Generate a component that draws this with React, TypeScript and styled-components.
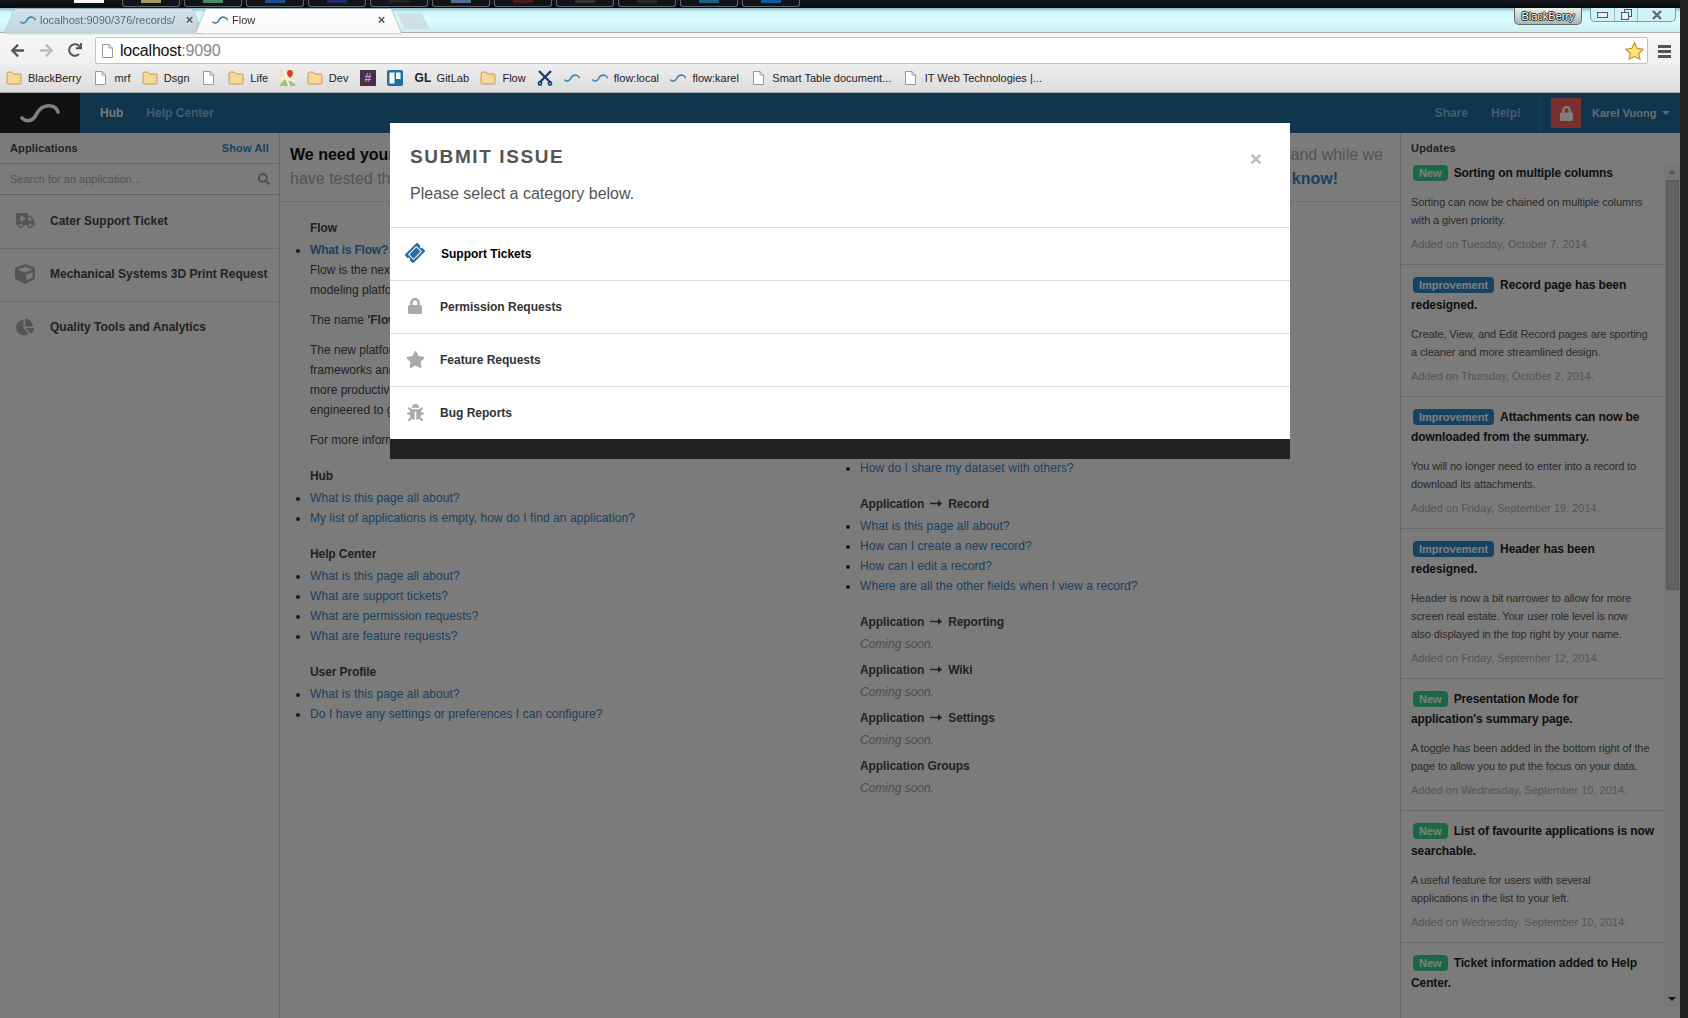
import React from "react";
import styled, { createGlobalStyle } from "styled-components";
import { FaAmbulance, FaArrowLeft, FaArrowRight, FaBug, FaChartPie, FaCube, FaLock, FaRedo, FaSearch, FaStar, FaTicketAlt } from "react-icons/fa";

const GlobalStyle = createGlobalStyle`
  html, body { margin: 0; padding: 0; background: #222; }
  body { font-family: "Liberation Sans", Arial, sans-serif; font-size: 12px; color: #444; overflow: hidden; }
  * { box-sizing: border-box; }
`;

const Screen = styled.div`display: flex; width: 1688px; height: 1018px; overflow: hidden;`;
const Win = styled.div`display: flex; flex-direction: column; width: 1680px; height: 1018px;`;
const DesktopEdge = styled.div`flex: 1; background: #222;`;

const Taskbar = styled.div`
  display: flex; gap: 4px; height: 8px; padding-left: 122px; position: relative;
  background: linear-gradient(#14181d, #05080c);
`;
const TaskChip = styled.div`width: 30px; height: 3px; background: #f4f4f4; margin-left: -48px; margin-right: 14px;`;
const TaskButton = styled.div<{ $peek: string }>`
  width: 58px; height: 7px; border: 1px solid #666; border-top: 0; border-radius: 0 0 3px 3px;
  display: flex; justify-content: center; background: #11151a;
  &::after { content: ""; width: 20px; height: 3px; background: ${(p) => p.$peek}; }
`;

const TabStrip = styled.div`
  display: flex; height: 25px; padding-left: 5px; position: relative;
  background: linear-gradient(#8fb4c8 0, #cdf6f8 4px, #d9fdfd 12px, #cceeee 24px);
  box-shadow: inset 0 -1px #a6b0b3;
`;
const TabFrame = styled.div<{ $active?: boolean }>`
  margin-top: 1px; margin-left: ${(p) => (p.$active ? "-6px" : "0")};
  filter: drop-shadow(0 0 1px #8b9ba3); position: relative; z-index: ${(p) => (p.$active ? 2 : 1)};
`;
const Tab = styled.div<{ $active?: boolean }>`
  display: flex; align-items: center; gap: 4px; height: 24px;
  width: ${(p) => (p.$active ? "205px" : "197px")};
  padding: ${(p) => (p.$active ? "0 15px 3px 16px" : "0 8px 3px 15px")};
  background: ${(p) => (p.$active ? "linear-gradient(#fff, #f8f8f8)" : "linear-gradient(#d4e3ea, #c3d4dc)")};
  clip-path: polygon(0 100%, 10px 0, calc(100% - 10px) 0, 100% 100%);
  color: ${(p) => (p.$active ? "#333" : "#5a6a72")};
  font-size: 11px;
`;
const TabTitle = styled.span`flex: 1; white-space: nowrap; overflow: hidden; padding-right: 8px;`;
const TabClose = styled.span`width: 9px; font-size: 13px; font-weight: 700; color: #555; line-height: 1; text-align: center;`;
const NewTab = styled.div`
  width: 33px; height: 16px; margin: 5px 0 0 -4px; background: #cfe0e4;
  clip-path: polygon(0 0, 24px 0, 100% 100%, 7px 100%);
`;
const WindowTools = styled.div`display: flex; gap: 8px; margin-left: auto; padding-right: 4px; align-items: flex-start; height: 17px;`;
const ProfileChip = styled.div`
  width: 68px; height: 17px; border: 1px solid #5a6a6a; border-top: 0; border-radius: 0 0 5px 5px;
  background: linear-gradient(#e6f0ea, #a5b8b2); color: #fff; font-size: 11px; line-height: 16px; text-align: center;
  text-shadow: 1px 0 #222, -1px 0 #222, 0 1px #222, 0 -1px #222;
`;
const WinControls = styled.div`
  display: flex; width: 86px; height: 14px; border: 1px solid #7f9aa5; border-top: 0; border-radius: 0 0 5px 5px;
  background: #d2f3f4;
`;
const WinControl = styled.div<{ $wide?: boolean }>`
  flex: ${(p) => (p.$wide ? "1" : "0 0 23px")}; display: flex; align-items: center; justify-content: center;
  & + & { border-left: 1px solid #9fb6bd; }
`;

const Toolbar = styled.div`
  display: flex; align-items: flex-end; height: 31px; padding: 0 9px 0 10px; background: linear-gradient(#f6f6f6, #f0f0f0);
`;
const NavArrows = styled.div`display: flex; gap: 14px; width: 85px; height: 26px; align-items: center; padding-bottom: 2px;`;
const Omnibox = styled.div`
  flex: 1; display: flex; align-items: center; gap: 7px; height: 27px; padding: 0 3px 0 6px;
  background: #fff; border: 1px solid #c2c2c2; border-radius: 2px; font-size: 16px; letter-spacing: -0.2px; color: #111;
`;
const Port = styled.span`color: #888; margin-left: -7px;`;
const OmniSpacer = styled.span`flex: 1;`;
const Hamburger = styled.div`
  width: 13px; height: 13px; margin: 0 0 6px 10px;
  background: repeating-linear-gradient(#555 0 3px, transparent 3px 5px);
`;

const Bookmarks = styled.div`
  display: flex; align-items: center; gap: 11.4px; height: 29px; padding-left: 6px;
  background: linear-gradient(#eeeeee, #dcdcdc); border-bottom: 1px solid #a5a5a5;
  font-size: 11px; color: #222;
`;
const Bookmark = styled.div`display: flex; align-items: center; gap: 6px;`;
const BmBox = styled.span`display: flex; justify-content: center; width: 16px;`;
const SlackMark = styled.span`
  display: block; width: 16px; height: 16px; background: #4a2f4b; color: #b9a8bb;
  font-size: 12px; font-weight: 700; line-height: 16px; text-align: center;
`;
const GL = styled.span`width: 16px; font-weight: 700; font-size: 12px; color: #222;`;

const AppArea = styled.div`flex: 1; display: flex; flex-direction: column; position: relative; background: #f7f7f7; min-height: 0;`;
const Nav = styled.div`display: flex; align-items: stretch; height: 40px; background: #206a9a; flex: none;`;
const LogoBox = styled.div`width: 80px; background: #222; display: flex; align-items: center; justify-content: center;`;
const NavLinks = styled.div`display: flex; align-items: center; gap: 23px; padding-left: 20px;`;
const NavLink = styled.span<{ $on?: boolean }>`font-weight: 700; font-size: 12px; color: ${(p) => (p.$on ? "#e8f4fc" : "#8cb8d4")};`;
const NavRight = styled.div`display: flex; align-items: center; gap: 23px; margin-left: auto;`;
const UserMenu = styled.div`
  display: flex; align-items: center; height: 100%; margin-left: -4px; padding: 0 10px; border-left: 1px solid #3a7cab;
`;
const LockBox = styled.div`
  width: 30px; height: 30px; background: #f45e5e; color: #fff; display: flex; align-items: center; justify-content: center; margin-right: 11px;
`;
const UserName = styled.span`font-weight: 700; font-size: 11px; color: #c8dcec; width: 70px;`;
const Caret = styled.span`width: 0; height: 0; border: 4px solid transparent; border-top-color: #c8dcec; border-bottom: 0;`;

const Body = styled.div`flex: 1; display: flex; min-height: 0;`;
const Sidebar = styled.aside`width: 280px; flex: none; border-right: 1px solid #cfcfcf;`;
const SideHead = styled.div`
  display: flex; justify-content: space-between; align-items: center; height: 31px; padding: 0 10px;
  border-bottom: 1px solid #cfcfcf; font-weight: 700; font-size: 11px; letter-spacing: 0.15px; color: #444;
`;
const ShowAll = styled.span`color: #3484c0;`;
const SideSearch = styled.div`
  display: flex; justify-content: space-between; align-items: center; height: 31px; padding: 0 9px 0 10px;
  border-bottom: 1px solid #c8c8c8; font-size: 11px; color: #a8a8a8;
`;
const SideRow = styled.div`
  display: flex; align-items: center; height: 53px; padding: 0 0 2px 14px; gap: 14px; font-weight: 700; font-size: 12px; color: #444;
  & + & { border-top: 1px solid #d6d6d6; }
`;
const SideIcon = styled.span`display: flex; justify-content: center; width: 22px; color: #aaa;`;

const Main = styled.main`flex: 1; min-width: 0;`;
const Banner = styled.div`
  height: 69px; padding: 10px 17px 0 10px; border-bottom: 1px solid #dcdcdc; font-size: 16px; line-height: 24px; color: #a8a8a8;
`;
const BannerLine = styled.div<{ $inset?: number }>`display: flex; justify-content: space-between; padding-right: ${(p) => p.$inset ?? 0}px;`;
const BannerStrong = styled.b`color: #111;`;
const BannerLink = styled.b`color: #3484c0;`;
const Columns = styled.div`display: grid; grid-template-columns: 550px 550px; padding: 16px 10px 0;`;
const Column = styled.div<{ $top?: number }>`padding-top: ${(p) => p.$top ?? 0}px;`;
const Heading = styled.div`padding-left: 20px; font-weight: 700; line-height: 20px; margin-bottom: 2px; color: #444; letter-spacing: -0.1px;`;
const HelpList = styled.ul`margin: 0 0 16px; padding: 0 0 0 20px; line-height: 20px; color: #333;`;
const HelpLink = styled.a<{ $bold?: boolean }>`
  color: #3484c0; font-weight: ${(p) => (p.$bold ? 700 : 400)}; letter-spacing: ${(p) => (p.$bold ? "-0.2px" : "0.08px")};
`;
const Para = styled.p`margin: 0 0 10px; color: #444; white-space: nowrap; &:last-child { margin-bottom: 0; }`;
const Soon = styled.p`margin: 0 0 6px; padding-left: 20px; line-height: 20px; font-style: italic; color: #999;`;
const ArrowMark = styled.svg`width: 12px; height: 7px; margin: 0 6px; vertical-align: 1px;`;

const Updates = styled.aside`flex: none; display: flex; width: 280px; border-left: 1px solid #cfcfcf;`;
const Feed = styled.div`width: 263px; flex: none; overflow: hidden;`;
const FeedHead = styled.div`padding: 6px 10px 0; height: 25px; line-height: 18px; font-size: 11px; font-weight: 700; color: #444; letter-spacing: 0.2px;`;
const FeedItem = styled.article`
  padding: 10px 6px 11px 10px; border-bottom: 1px solid #d0d0d0;
  &:first-of-type { padding-top: 5px; }
  &:last-child { border-bottom: 0; }
`;
const FeedTitle = styled.div`font-weight: 700; font-size: 12px; line-height: 20px; color: #222; letter-spacing: -0.1px; white-space: pre-line;`;
const Badge = styled.span<{ $kind: "new" | "imp" }>`
  display: inline-block; height: 16px; line-height: 16px; padding: 0 6px; margin: 0 6px 0 2px; border-radius: 4px;
  font-size: 11px; letter-spacing: 0; color: #fff; background: ${(p) => (p.$kind === "new" ? "#34d08c" : "#2f86c4")};
`;
const FeedText = styled.p`margin: 10px 0 6px; font-size: 11px; line-height: 18px; color: #555; letter-spacing: -0.1px; white-space: pre-line;`;
const FeedDate = styled.div`font-size: 11px; line-height: 18px; color: #aaa;`;
const Scrollbar = styled.div`
  width: 16px; margin: 30px 0 11px; background: #ececec; display: flex; flex-direction: column; align-items: center;
`;
const ArrowUp = styled.span`width: 0; height: 0; margin: 7px 0 6px; border: 4px solid transparent; border-bottom-color: #aaa; border-top: 0;`;
const Thumb = styled.div`width: 13px; height: 410px; background: #c4c4c4; border: 1px solid #b0b0b0;`;
const ArrowDown = styled.span`width: 0; height: 0; margin-top: auto; margin-bottom: 6px; border: 4px solid transparent; border-top-color: #222; border-bottom: 0;`;

const Overlay = styled.div`
  position: absolute; inset: 0; background: rgba(0, 0, 0, 0.5); display: flex; justify-content: center; align-items: flex-start; padding-top: 30px;
`;
const Modal = styled.div`width: 900px; background: #fff;`;
const ModalHead = styled.div`display: flex; justify-content: space-between; align-items: flex-start; padding: 21px 28px 21px 20px;`;
const ModalTitle = styled.h2`margin: 0; font-size: 19px; line-height: 26px; font-weight: 700; letter-spacing: 1.6px; color: #555;`;
const ModalSub = styled.p`margin: 12px 0 0; font-size: 16px; line-height: 24px; color: #555;`;
const Close = styled.span`font-size: 21px; font-weight: 700; line-height: 26px; color: #bbb; margin-top: 2px;`;
const CategoryRow = styled.div<{ $on?: boolean }>`
  display: flex; align-items: center; gap: ${(p) => (p.$on ? 16 : 15)}px; height: 53px; padding-left: 15px; border-top: 1px solid #ddd;
  font-weight: 700; font-size: 12px; color: ${(p) => (p.$on ? "#000" : "#333")};
`;
const CategoryIcon = styled.span<{ $on?: boolean; $turn?: boolean }>`
  display: flex; justify-content: center; width: 20px; margin-bottom: 2px; color: ${(p) => (p.$on ? "#2b70a5" : "#aaa")};
  transform: ${(p) => (p.$turn ? "rotate(-45deg)" : "none")};
`;
const ModalFoot = styled.div`height: 20px; background: #222;`;

const Wave = ({ w = 16, color = "#3d86b5", sw = 4 }: { w?: number; color?: string; sw?: number }) => (
  <svg width={w} height={w / 2} viewBox="0 0 40 20" fill="none" style={{ flex: "none" }}>
    <path d="M2 15 C6 19 12 19 16 12 C20 4 25 2 31 3 C34 3.5 37 6 38 9" stroke={color} strokeWidth={sw} strokeLinecap="round" />
  </svg>
);
const Folder = () => (
  <svg width="16" height="14" viewBox="0 0 16 14">
    <path d="M1 3 Q1 1 3 1 H6 L8 3 H14 Q15 3 15 4 V12 Q15 13 14 13 H2 Q1 13 1 12 Z" fill="#f6d79a" stroke="#c69a55" />
  </svg>
);
const FileIcon = ({ s = 1 }: { s?: number }) => (
  <svg width={11 * s} height={14 * s} viewBox="0 0 11 14">
    <path d="M.5.5 H7 L10.5 4 V13.5 H.5 Z" fill="#fff" stroke="#999" />
    <path d="M7 .5 V4 H10.5" fill="none" stroke="#999" />
  </svg>
);
const MapsIcon = () => (
  <svg width="16" height="16" viewBox="0 0 16 16">
    <rect width="16" height="16" fill="#e9e4c4" />
    <path d="M0 16 L7 8 L16 14 V16 Z" fill="#9fc47e" />
    <path d="M0 7 L16 11 M5 0 L10 16" stroke="#f4f1e4" strokeWidth="2" />
    <path d="M11 0 a3 3 0 0 1 3 3 c0 2 -3 5 -3 5 s-3 -3 -3 -5 a3 3 0 0 1 3 -3z" fill="#d93a32" />
  </svg>
);
const TrelloIcon = () => (
  <svg width="16" height="16" viewBox="0 0 16 16">
    <rect width="16" height="16" rx="2" fill="#1f6fa3" />
    <rect x="2.5" y="2.5" width="5" height="11" fill="#fff" />
    <rect x="9" y="2.5" width="4.5" height="6.5" fill="#fff" />
  </svg>
);
const CrossTools = () => (
  <svg width="16" height="16" viewBox="0 0 16 16" fill="none" stroke="#17406e" strokeWidth="2.4">
    <path d="M2 1 L13 12 M14 1 L3 12" />
    <circle cx="3" cy="13.5" r="1.6" strokeWidth="1.6" />
    <circle cx="13" cy="13.5" r="1.6" strokeWidth="1.6" />
  </svg>
);

const Arrow = () => (
  <ArrowMark viewBox="0 0 12 7"><path d="M0 2.7 H8 V0 L12 3.5 L8 7 V4.3 H0 Z" fill="#444" /></ArrowMark>
);

const peeks = ["#a89a5c", "#4a8a6a", "#1a4f8a", "#23286a", "#222", "#55708f", "#4a1c1c", "#333", "#2a2a2a", "#225f85", "#1458a0"];

const bookmarks: { icon: React.ReactNode; label?: string }[] = [
  { icon: <Folder />, label: "BlackBerry" },
  { icon: <FileIcon />, label: "mrf" },
  { icon: <Folder />, label: "Dsgn" },
  { icon: <FileIcon /> },
  { icon: <Folder />, label: "Life" },
  { icon: <MapsIcon /> },
  { icon: <Folder />, label: "Dev" },
  { icon: <SlackMark>#</SlackMark> },
  { icon: <TrelloIcon /> },
  { icon: <GL>GL</GL>, label: "GitLab" },
  { icon: <Folder />, label: "Flow" },
  { icon: <CrossTools /> },
  { icon: <Wave /> },
  { icon: <Wave />, label: "flow:local" },
  { icon: <Wave />, label: "flow:karel" },
  { icon: <FileIcon />, label: "Smart Table document..." },
  { icon: <FileIcon />, label: "IT Web Technologies |..." },
];

const updates: { kind: "new" | "imp"; title: string; text?: string; date?: string }[] = [
  { kind: "new", title: "Sorting on multiple columns", text: "Sorting can now be chained on multiple columns\nwith a given priority.", date: "Added on Tuesday, October 7, 2014." },
  { kind: "imp", title: "Record page has been\nredesigned.", text: "Create, View, and Edit Record pages are sporting\na cleaner and more streamlined design.", date: "Added on Thursday, October 2, 2014." },
  { kind: "imp", title: "Attachments can now be\ndownloaded from the summary.", text: "You will no longer need to enter into a record to\ndownload its attachments.", date: "Added on Friday, September 19, 2014." },
  { kind: "imp", title: "Header has been\nredesigned.", text: "Header is now a bit narrower to allow for more\nscreen real estate. Your user role level is now\nalso displayed in the top right by your name.", date: "Added on Friday, September 12, 2014." },
  { kind: "new", title: "Presentation Mode for\napplication's summary page.", text: "A toggle has been added in the bottom right of the\npage to allow you to put the focus on your data.", date: "Added on Wednesday, September 10, 2014." },
  { kind: "new", title: "List of favourite applications is now\nsearchable.", text: "A useful feature for users with several\napplications in the list to your left.", date: "Added on Wednesday, September 10, 2014." },
  { kind: "new", title: "Ticket information added to Help\nCenter." },
];

const LinkSection = ({ title, links }: { title: React.ReactNode; links: string[] }) => (
  <>
    <Heading>{title}</Heading>
    <HelpList>{links.map((l, i) => <li key={i}><HelpLink>{l}</HelpLink></li>)}</HelpList>
  </>
);
const SoonSection = ({ title }: { title: React.ReactNode }) => (
  <>
    <Heading>{title}</Heading>
    <Soon>Coming soon.</Soon>
  </>
);

export default function App() {
  return (
    <Screen>
      <GlobalStyle />
      <Win>
        <Taskbar>
          <TaskChip />
          {peeks.map((c, i) => <TaskButton key={i} $peek={c} />)}
        </Taskbar>
        <TabStrip>
          <TabFrame>
            <Tab><Wave /><TabTitle>localhost:9090/376/records/</TabTitle><TabClose>×</TabClose></Tab>
          </TabFrame>
          <TabFrame $active>
            <Tab $active><Wave /><TabTitle>Flow</TabTitle><TabClose>×</TabClose></Tab>
          </TabFrame>
          <NewTab />
          <WindowTools>
            <ProfileChip>BlackBerry</ProfileChip>
            <WinControls>
              <WinControl><svg width="11" height="6"><rect x=".5" y=".5" width="10" height="5" fill="#eef" stroke="#556" /></svg></WinControl>
              <WinControl><svg width="11" height="11"><rect x="3.5" y=".5" width="7" height="7" fill="none" stroke="#556" /><rect x=".5" y="3.5" width="7" height="7" fill="#eef" stroke="#556" /></svg></WinControl>
              <WinControl $wide><svg width="12" height="10"><path d="M2 1 L10 9 M10 1 L2 9" stroke="#667" strokeWidth="2.4" /></svg></WinControl>
            </WinControls>
          </WindowTools>
        </TabStrip>
        <Toolbar>
          <NavArrows>
            <FaArrowLeft size={15} color="#555" />
            <FaArrowRight size={15} color="#bbb" />
            <FaRedo size={14} color="#555" />
          </NavArrows>
          <Omnibox>
            <FileIcon />
            <span>localhost</span><Port>:9090</Port>
            <OmniSpacer />
            <svg width="19" height="18" viewBox="0 0 24 23"><path d="M12 1 L15.4 8.2 L23 9.2 L17.4 14.6 L18.9 22 L12 18.4 L5.1 22 L6.6 14.6 L1 9.2 L8.6 8.2 Z" fill="#ffe27a" stroke="#c9963a" strokeWidth="1.6" /></svg>
          </Omnibox>
          <Hamburger />
        </Toolbar>
        <Bookmarks>
          {bookmarks.map((b, i) => (
            <Bookmark key={i}><BmBox>{b.icon}</BmBox>{b.label && <span>{b.label}</span>}</Bookmark>
          ))}
        </Bookmarks>
        <AppArea>
          <Nav>
            <LogoBox><Wave w={40} color="#fff" sw={3.6} /></LogoBox>
            <NavLinks><NavLink $on>Hub</NavLink><NavLink>Help Center</NavLink></NavLinks>
            <NavRight>
              <NavLink>Share</NavLink>
              <NavLink>Help!</NavLink>
              <UserMenu>
                <LockBox><FaLock size={15} /></LockBox>
                <UserName>Karel Vuong</UserName>
                <Caret />
              </UserMenu>
            </NavRight>
          </Nav>
          <Body>
            <Sidebar>
              <SideHead><span>Applications</span><ShowAll>Show All</ShowAll></SideHead>
              <SideSearch><span>Search for an application...</span><FaSearch size={12} color="#a0a0a0" /></SideSearch>
              <SideRow><SideIcon><FaAmbulance size={19} /></SideIcon>Cater Support Ticket</SideRow>
              <SideRow><SideIcon><FaCube size={20} /></SideIcon>Mechanical Systems 3D Print Request</SideRow>
              <SideRow><SideIcon><FaChartPie size={18} /></SideIcon>Quality Tools and Analytics</SideRow>
            </Sidebar>
            <Main>
              <Banner>
                <BannerLine><BannerStrong>We need your help!</BannerStrong><span>and while we</span></BannerLine>
                <BannerLine $inset={45}><span>have tested the platform</span><BannerLink>know!</BannerLink></BannerLine>
              </Banner>
              <Columns>
                <Column>
                  <Heading>Flow</Heading>
                  <HelpList>
                    <li>
                      <HelpLink $bold>What is Flow?</HelpLink>
                      <Para>Flow is the next generation data<br />modeling platform.</Para>
                      <Para>The name <b>'Flow'</b> comes from the flow of data.</Para>
                      <Para>The new platform is built on modern<br />frameworks and tools to make everyone<br />more productive, and it has been<br />engineered to grow with its users.</Para>
                      <Para>For more information, see below.</Para>
                    </li>
                  </HelpList>
                  <LinkSection title="Hub" links={["What is this page all about?", "My list of applications is empty, how do I find an application?"]} />
                  <LinkSection title="Help Center" links={["What is this page all about?", "What are support tickets?", "What are permission requests?", "What are feature requests?"]} />
                  <LinkSection title="User Profile" links={["What is this page all about?", "Do I have any settings or preferences I can configure?"]} />
                </Column>
                <Column $top={240}>
                  <HelpList><li><HelpLink>How do I share my dataset with others?</HelpLink></li></HelpList>
                  <LinkSection title={<>Application<Arrow />Record</>} links={["What is this page all about?", "How can I create a new record?", "How can I edit a record?", "Where are all the other fields when I view a record?"]} />
                  <SoonSection title={<>Application<Arrow />Reporting</>} />
                  <SoonSection title={<>Application<Arrow />Wiki</>} />
                  <SoonSection title={<>Application<Arrow />Settings</>} />
                  <SoonSection title="Application Groups" />
                </Column>
              </Columns>
            </Main>
            <Updates>
              <Feed>
                <FeedHead>Updates</FeedHead>
                {updates.map((u, i) => (
                  <FeedItem key={i}>
                    <FeedTitle><Badge $kind={u.kind}>{u.kind === "new" ? "New" : "Improvement"}</Badge>{u.title}</FeedTitle>
                    {u.text && <FeedText>{u.text}</FeedText>}
                    {u.date && <FeedDate>{u.date}</FeedDate>}
                  </FeedItem>
                ))}
              </Feed>
              <Scrollbar><ArrowUp /><Thumb /><ArrowDown /></Scrollbar>
            </Updates>
          </Body>
          <Overlay>
            <Modal>
              <ModalHead>
                <div>
                  <ModalTitle>SUBMIT ISSUE</ModalTitle>
                  <ModalSub>Please select a category below.</ModalSub>
                </div>
                <Close>×</Close>
              </ModalHead>
              <CategoryRow $on><CategoryIcon $on $turn><FaTicketAlt size={18} /></CategoryIcon>Support Tickets</CategoryRow>
              <CategoryRow><CategoryIcon><FaLock size={16} /></CategoryIcon>Permission Requests</CategoryRow>
              <CategoryRow><CategoryIcon><FaStar size={19} /></CategoryIcon>Feature Requests</CategoryRow>
              <CategoryRow><CategoryIcon><FaBug size={17} /></CategoryIcon>Bug Reports</CategoryRow>
              <ModalFoot />
            </Modal>
          </Overlay>
        </AppArea>
      </Win>
      <DesktopEdge />
    </Screen>
  );
}
